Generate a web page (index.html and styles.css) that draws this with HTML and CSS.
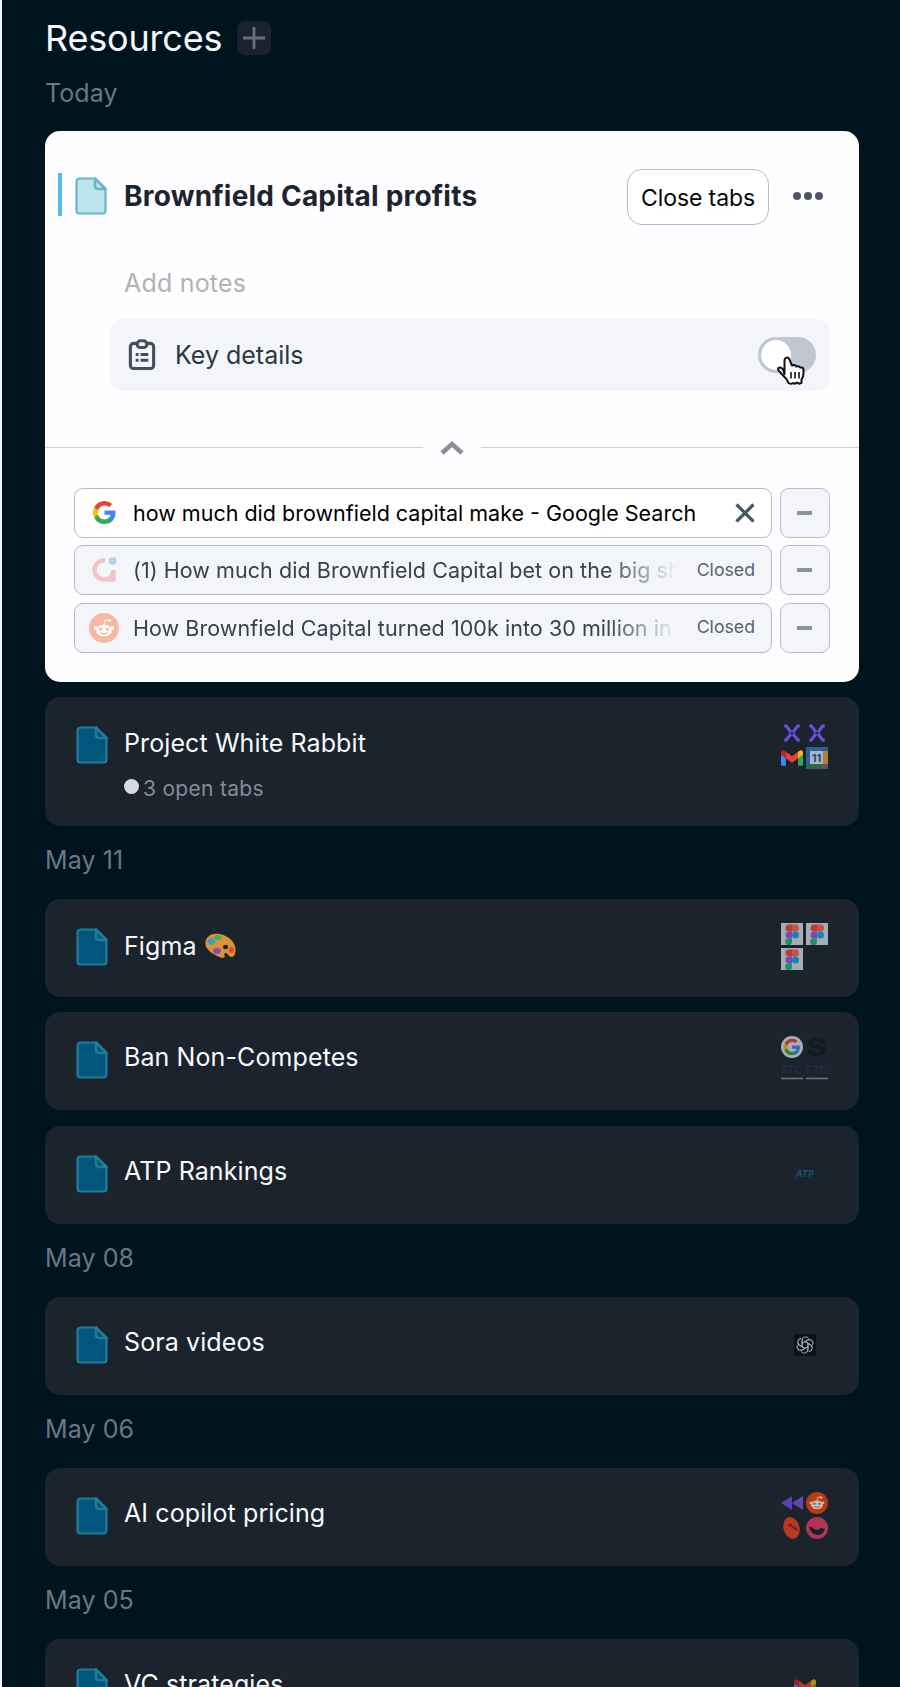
FILE: index.html
```html
<!DOCTYPE html>
<html lang="en">
<head>
    <meta charset="UTF-8">
    <meta name="viewport" content="width=device-width, initial-scale=1.0">
    <title>Resources</title>
    <link rel="stylesheet" href="styles.css">
</head>
<body>
    <!-- shared icons -->
    <svg class="defs">
        <symbol id="file" viewBox="0 0 32 38">
            <path d="M4 1.5h16L30.500 12v21.500a3 3 0 0 1-3 3H4.500a3 3 0 0 1-3-3v-29a3 3 0 0 1 3-3z" fill="currentColor" stroke="var(--line)" stroke-width="2.200"/>
            <path d="M20 1.500v7.500a3 3 0 0 0 3 3h7.500z" fill="currentColor" stroke="var(--line)" stroke-width="2.600" stroke-linejoin="round"/>
        </symbol>
        <symbol id="google" viewBox="0 0 24 24">
            <path fill="#4285f4" d="M22.560 12.250c0-.78-.07-1.530-.2-2.250H12v4.260h5.920a5.060 5.060 0 0 1-2.200 3.320v2.770h3.570c2.080-1.920 3.270-4.740 3.270-8.100z"/>
            <path fill="#34a853" d="M12 23c2.970 0 5.460-.98 7.280-2.660l-3.570-2.770c-.98.660-2.230 1.060-3.710 1.060-2.860 0-5.290-1.930-6.160-4.530H2.180v2.840A11 11 0 0 0 12 23z"/>
            <path fill="#fbbc05" d="M5.840 14.090a6.600 6.600 0 0 1 0-4.180V7.070H2.180a11 11 0 0 0 0 9.860z"/>
            <path fill="#ea4335" d="M12 5.380c1.620 0 3.060.56 4.210 1.640l3.150-3.150A11 11 0 0 0 2.180 7.070l3.660 2.840C6.710 7.310 9.140 5.380 12 5.380z"/>
        </symbol>
        <symbol id="reddit" viewBox="0 0 30 30">
            <circle cx="15" cy="15" r="15" fill="#ff4500"/>
            <g fill="#fff">
                <ellipse cx="15" cy="17.500" rx="8" ry="6"/>
                <circle cx="6.800" cy="14.800" r="2"/>
                <circle cx="23.200" cy="14.800" r="2"/>
                <circle cx="20.500" cy="7.500" r="1.600"/>
            </g>
            <path d="M15 12l1-5 4 .7" fill="none" stroke="#fff" stroke-width="1.200"/>
            <circle cx="11.700" cy="16" r="1.500" fill="#ff4500"/>
            <circle cx="18.300" cy="16" r="1.500" fill="#ff4500"/>
            <path d="M11.500 19.800q3.500 2.400 7 0" fill="none" stroke="#ff4500" stroke-width="1.200"/>
        </symbol>
        <symbol id="gmail" viewBox="0 0 20 20">
            <path fill="#4285f4" d="M0 6l4.500 3.400V17H1.400A1.400 1.400 0 0 1 0 15.600z"/>
            <path fill="#34a853" d="M20 6l-4.500 3.400V17h3.100a1.400 1.400 0 0 0 1.400-1.400z"/>
            <path fill="#fbbc04" d="M15.500 4.300l1.300-1A2 2 0 0 1 20 5v1.800l-4.500 3.500z"/>
            <path fill="#ea4335" d="M4.500 10.200V4.300L10 8.400l5.500-4.100v5.900L10 14.300z"/>
            <path fill="#c5221f" d="M0 5a2 2 0 0 1 3.200-1.700l1.300 1v5.900L0 6.800z"/>
        </symbol>
        <symbol id="cross" viewBox="0 0 20 20">
            <path d="M3 3.500h1.700L8.500 8.500v3l-3.800 5H3M17 3.500h-1.700l-3.800 5v3l3.800 5H17" fill="none" stroke="#6b4de0" stroke-width="2.800"/>
            <path d="M8.500 10h3" stroke="#1c232e" stroke-width="1.500"/>
        </symbol>
        <symbol id="figma" viewBox="0 0 22 22">
            <path fill="#a4acb4" d="M0 0h22v22H0z"/>
            <path fill="#b63f30" d="M11 1.500H8a3.500 3.500 0 0 0 0 7h3z"/>
            <path fill="#c94f48" d="M11 1.500h3.500a3.500 3.500 0 0 1 0 7H11z"/>
            <path fill="#7a48b8" d="M11 8.500H8a3.400 3.400 0 0 0 0 6.900h3z"/>
            <circle cx="14.500" cy="11.900" r="3.500" fill="#1583b8"/>
            <path fill="#219064" d="M11 15.400H8a3.400 3.400 0 1 0 3 3.400z"/>
        </symbol>
        <symbol id="ftc" viewBox="0 0 22 22">
            <text x="11" y="13" class="ftc-text">FTC</text>
            <path d="M0 17.500h22" stroke="#77706f" stroke-width="1.600"/>
        </symbol>
    </svg>

    <div class="container">
        <div class="header">
            <h1>Resources</h1>
            <button class="add-btn">
                <svg width="34" height="34"><path d="M6 17h22M17 6v22" stroke="#66717b" stroke-width="2.800"/></svg>
            </button>
        </div>

        <h2>Today</h2>
        <div class="card active">
            <div class="card-top">
                <svg class="file"><use href="#file"/></svg>
                <span class="name">Brownfield Capital profits</span>
                <button class="close-tabs">Close tabs</button>
                <svg class="more" width="30" height="10"><g fill="#4d5667"><circle cx="4" cy="5" r="4"/><circle cx="15" cy="5" r="4"/><circle cx="26" cy="5" r="4"/></g></svg>
            </div>
            <div class="notes">Add notes</div>
            <div class="details">
                <svg class="clipboard" viewBox="0 0 28 32" fill="none" stroke="#43505b" stroke-width="3.200">
                    <path d="M9 4.500H5.500a3.500 3.500 0 0 0-3.500 3.500v19a3.500 3.500 0 0 0 3.500 3.500h17A3.500 3.500 0 0 0 26 27V8a3.500 3.500 0 0 0-3.500-3.500H19"/>
                    <rect x="9" y="1.800" width="10" height="7" rx="3.500"/>
                    <path d="M7.500 16h3M12.500 16h8M7.500 22h3M12.500 22h8"/>
                </svg>
                <span>Key details</span>
                <div class="toggle">
                    <div class="knob"></div>
                    <svg class="cursor" width="30" height="32" viewBox="0 0 30 32">
                        <path d="M9.500 19V4.800a2.500 2.500 0 0 1 4.800-.6L17 10.500q3-1.500 4.200 1 3-1 4 1 3.300-.5 3.300 2.500v3.500q0 3.500-2 6v3.500q-2.500 1.500-4.500-.5-2 2-4 .5-2 1.500-4.500 0-1-3.500-4-6l-5.500-6Q2 13.500 4 12.700q2-.7 4 1.800z" fill="#fff" stroke="#111" stroke-width="2" stroke-linejoin="round"/>
                        <path d="M16 17v6.500M20 17v6.500M24 17v6.500" stroke="#111" stroke-width="1.600"/>
                    </svg>
                </div>
            </div>
            <div class="divider">
                <svg width="26" height="16"><path d="M3 13l10-9 10 9" fill="none" stroke="#869196" stroke-width="4.500"/></svg>
            </div>
            <div class="tabs">
                <div class="tab-row">
                    <div class="tab open">
                        <svg class="tab-icon"><use href="#google" x="3" y="2" width="25" height="25"/></svg>
                        <span class="tab-name">how much did brownfield capital make - Google Search</span>
                        <svg class="x" width="20" height="20"><path d="M1.500 1.500l17 17M18.500 1.500l-17 17" stroke="#4a575f" stroke-width="3.200"/></svg>
                    </div>
                    <button class="remove"></button>
                </div>
                <div class="tab-row">
                    <div class="tab">
                        <svg class="tab-icon faded" viewBox="0 0 30 30">
                            <path d="M16 5.500a9.500 9.500 0 1 0 8.500 9.500v9.500H14" fill="none" stroke="#ef6f6f" stroke-width="4.500"/>
                            <circle cx="23.500" cy="6" r="4" fill="#4e9fb5"/>
                        </svg>
                        <span class="tab-name fade">(1) How much did Brownfield Capital bet on the big sh</span>
                        <span class="closed">Closed</span>
                    </div>
                    <button class="remove"></button>
                </div>
                <div class="tab-row">
                    <div class="tab">
                        <svg class="tab-icon faded"><use href="#reddit"/></svg>
                        <span class="tab-name fade">How Brownfield Capital turned 100k into 30 million in t</span>
                        <span class="closed">Closed</span>
                    </div>
                    <button class="remove"></button>
                </div>
            </div>
        </div>

        <div class="card tall">
            <svg class="file"><use href="#file"/></svg>
            <div class="info">
                <span class="name">Project White Rabbit</span>
                <span class="open-tabs"><i class="dot"></i>3 open tabs</span>
            </div>
            <div class="favicons">
                <svg><use href="#cross"/></svg>
                <svg><use href="#cross"/></svg>
                <svg><use href="#gmail"/></svg>
                <svg viewBox="0 0 22 22">
                    <path fill="#315c96" d="M0 0h22v22H0z"/>
                    <path fill="#a98332" d="M17 4h5v13h-5z"/>
                    <path fill="#286a4c" d="M0 17h17v5H0z"/>
                    <path fill="#a33c38" d="M17 17h5l-5 5z"/>
                    <path fill="#a9b6c4" d="M4 4h13v13H4z"/>
                    <text x="10.500" y="15" class="cal">11</text>
                </svg>
            </div>
        </div>

        <h2>May 11</h2>
        <div class="card">
            <svg class="file"><use href="#file"/></svg>
            <span class="name with-icon">Figma
                <svg class="palette" viewBox="0 0 32 26">
                    <path d="M2 7C5-1 17-1 25 5c6 4.500 8 11 5.500 17-2 3.500-5.500 1.500-7-1-1.500-2-4-1-3 1.500 1 2.500-2 3-5 1.500C6 20-1 14 2 7z" fill="#dd9236"/>
                    <ellipse cx="14" cy="4.500" rx="3.600" ry="2.500" fill="#35b06c"/>
                    <ellipse cx="7.500" cy="8.500" rx="3.600" ry="3.200" fill="#3d9fc0"/>
                    <ellipse cx="13" cy="18" rx="4" ry="2.900" fill="#8a4bb0"/>
                    <ellipse cx="27.500" cy="17" rx="2.400" ry="3" fill="#dc4632"/>
                    <ellipse cx="21.500" cy="14" rx="2.600" ry="2.200" fill="#1c222d"/>
                </svg>
            </span>
            <div class="favicons">
                <svg><use href="#figma"/></svg>
                <svg><use href="#figma"/></svg>
                <svg><use href="#figma"/></svg>
            </div>
        </div>
        <div class="card">
            <svg class="file"><use href="#file"/></svg>
            <span class="name">Ban Non-Competes</span>
            <div class="favicons">
                <svg class="dim" viewBox="0 0 22 22"><circle cx="11" cy="11" r="11" fill="#e6eaee"/><use href="#google" x="2" y="2" width="18" height="18"/></svg>
                <svg class="s-icon" viewBox="0 0 22 22"><text x="11" y="20" class="s-logo" textLength="21" lengthAdjust="spacingAndGlyphs">S</text></svg>
                <svg><use href="#ftc"/></svg>
                <svg><use href="#ftc"/></svg>
            </div>
        </div>
        <div class="card">
            <svg class="file"><use href="#file"/></svg>
            <span class="name">ATP Rankings</span>
            <div class="favicons single">
                <svg viewBox="0 0 22 22"><text x="11" y="14" class="atp">ATP</text></svg>
            </div>
        </div>

        <h2>May 08</h2>
        <div class="card">
            <svg class="file"><use href="#file"/></svg>
            <span class="name">Sora videos</span>
            <div class="favicons single">
                <svg viewBox="0 0 22 22">
                    <path fill="#09131b" d="M0 0h22v22H0z"/>
                    <g fill="none" stroke="#a4a9ae" stroke-width="1">
                        <path id="arm" d="M8 12.700V6.500a3.700 3.700 0 0 1 6.800-2M8 9.300l5.300-3a3.700 3.700 0 0 1 2.700-.4"/>
                        <use href="#arm" transform="rotate(60 11 11)"/>
                        <use href="#arm" transform="rotate(120 11 11)"/>
                        <use href="#arm" transform="rotate(180 11 11)"/>
                        <use href="#arm" transform="rotate(240 11 11)"/>
                        <use href="#arm" transform="rotate(300 11 11)"/>
                    </g>
                </svg>
            </div>
        </div>

        <h2>May 06</h2>
        <div class="card">
            <svg class="file"><use href="#file"/></svg>
            <span class="name">AI copilot pricing</span>
            <div class="favicons">
                <svg viewBox="0 0 22 22"><path fill="#5a3fae" d="M0 11l11-7v14z"/><path fill="#6a44ac" d="M11 11l11-7v14z"/></svg>
                <svg class="dim"><use href="#reddit"/></svg>
                <svg viewBox="0 0 22 22"><ellipse cx="10.500" cy="11" rx="8" ry="11" transform="rotate(-15 10.500 11)" fill="#b93824"/><path d="M7 9l3-1.500 1 2.500M12 10l4 3" fill="none" stroke="#5e211f" stroke-width="1.600"/></svg>
                <svg viewBox="0 0 22 22"><circle cx="11" cy="11" r="11" fill="#ae3850"/><path d="M3 10q3-1 5 2 4 2 7-1l4 1q-2 6-8 6-6-1-8-8z" fill="#1d202c"/></svg>
            </div>
        </div>

        <h2>May 05</h2>
        <div class="card">
            <svg class="file"><use href="#file"/></svg>
            <span class="name">VC strategies</span>
            <div class="favicons single">
                <svg class="dim"><use href="#gmail"/></svg>
            </div>
        </div>
    </div>
</body>
</html>
```
FILE: styles.css
```css
* {
    box-sizing: border-box;
}
body {
    font-family: Inter, "Liberation Sans", sans-serif;
    margin: 0;
    height: 1687px;
    overflow: hidden;
    background: #00141d;
    border-left: 2px solid #f4f4f6;
}
.defs {
    display: none;
}
.container {
    width: 814px;
    margin-left: 43px;
}
button {
    font-family: inherit;
    padding: 0;
    cursor: pointer;
}
.header {
    display: flex;
    align-items: center;
    padding-top: 16px;
    height: 60px;
}
h1 {
    margin: 0;
    width: 192px;
    font-size: 36px;
    font-weight: 400;
    line-height: 44px;
    letter-spacing: -0.2px;
    color: #f6f8fc;
    white-space: nowrap;
}
.add-btn {
    width: 34px;
    height: 34px;
    border: none;
    border-radius: 8px;
    background: #1a222d;
}
.add-btn svg {
    display: block;
}
h2 {
    margin: 0;
    height: 73px;
    padding-top: 18px;
    font-size: 25px;
    font-weight: 400;
    line-height: 32px;
    letter-spacing: 0.1px;
    color: #6a7884;
}
.header + h2 {
    height: 71px;
    padding-top: 17px;
}
.card {
    display: flex;
    height: 98px;
    padding: 29px 30px 0 31px;
    border-radius: 15px;
    background: #1b232d;
    color: #f8fafc;
}
.card + .card {
    margin-top: 15.500px;
}
.file {
    --line: #1f7d97;
    flex: none;
    width: 32px;
    height: 38px;
    color: #02567d;
}
.name {
    margin-left: 16px;
    font-size: 25px;
    line-height: 32px;
    letter-spacing: 0.1px;
    white-space: nowrap;
}
.with-icon {
    margin-top: 2px;
}
.card.tall {
    height: 129px;
}
.tall .name {
    margin-top: 1px;
}
.info {
    display: flex;
    flex-direction: column;
}
.open-tabs {
    display: flex;
    align-items: center;
    gap: 4px;
    margin: 15px 0 0 16px;
    font-size: 21px;
    line-height: 30px;
    letter-spacing: 0.3px;
    color: #838d97;
}
.dot {
    width: 15px;
    height: 15px;
    border-radius: 50%;
    background: #d7d9e2;
    margin-top: -4px;
}
.palette {
    width: 32px;
    height: 26px;
    vertical-align: -4px;
}
.favicons {
    display: grid;
    grid-template-columns: 22px 22px;
    grid-auto-rows: 22px;
    gap: 3px;
    margin: -5px 0 0 auto;
    width: 48px;
    height: 47px;
}
.tall .favicons {
    margin-top: -4px;
}
.favicons.single {
    display: flex;
    justify-content: center;
    align-items: center;
    margin-top: -4px;
}
.favicons svg {
    width: 22px;
    height: 22px;
}
.dim {
    opacity: 0.7;
}
.cal {
    font-size: 11px;
    font-weight: 700;
    text-anchor: middle;
    fill: #25486e;
}
.ftc-text {
    font-size: 11px;
    text-anchor: middle;
    fill: #193748;
}
.atp {
    font-size: 9px;
    font-weight: 700;
    font-style: italic;
    text-anchor: middle;
    fill: #10557a;
}
.s-icon {
    overflow: visible;
}
.s-logo {
    font-size: 25px;
    font-weight: 800;
    text-anchor: middle;
    fill: #101b25;
}

/* expanded card */
.card.active {
    flex-direction: column;
    height: 550.500px;
    padding: 0;
    background: #fefdff;
    color: #1c242d;
}
.card.active + .card {
    margin-top: 15px;
}
.card-top {
    display: flex;
    align-items: center;
    height: 43px;
    margin: 42px 33px 0 13px;
    padding-left: 14px;
    border-left: 4px solid #54bce2;
}
.active .file {
    --line: #66b8c6;
    margin: 3px 0 0 -1px;
    color: #bce4ea;
}
.active .name {
    margin: 2px 0 0 17px;
    font-size: 28px;
    font-weight: 700;
    letter-spacing: 0.200px;
}
.close-tabs {
    width: 142px;
    height: 56px;
    margin: 4px 24px 0 auto;
    padding-top: 2px;
    border: 1.500px solid #b4bfc7;
    border-radius: 15px;
    background: #fff;
    font-size: 23px;
    letter-spacing: -0.1px;
    color: #050709;
}
.more {
    margin-top: 3px;
    margin-right: 3px;
}
.notes {
    margin: 51px 0 0 79px;
    font-size: 25px;
    line-height: 32px;
    letter-spacing: 0.2px;
    color: #b2b2b4;
}
.details {
    display: flex;
    align-items: center;
    height: 72px;
    margin: 20px 29px 0 65px;
    padding: 0 14px 0 18px;
    border-radius: 14px;
    background: #f3f5f9;
    font-size: 25px;
    color: #2c3740;
}
.clipboard {
    width: 28px;
    height: 31px;
    margin: -2px 19px 0 0;
}
.toggle {
    position: relative;
    width: 58px;
    height: 36px;
    margin-left: auto;
    padding: 3px;
    border-radius: 18px;
    background: #bfc6cf;
}
.knob {
    width: 30px;
    height: 30px;
    border-radius: 50%;
    background: #fff;
}
.cursor {
    position: absolute;
    left: 17px;
    top: 18px;
}
.divider {
    display: flex;
    align-items: center;
    gap: 16px;
    height: 16px;
    margin-top: 48.500px;
}
.divider::before,
.divider::after {
    content: "";
    flex: 1;
    height: 1px;
    margin-top: -1px;
    background: #cbd4d9;
}
.tabs {
    display: flex;
    flex-direction: column;
    gap: 7.500px;
    margin: 32px 29px 0;
}
.tab-row {
    display: flex;
    gap: 7.500px;
}
.tab {
    display: flex;
    align-items: center;
    width: 698px;
    height: 50px;
    padding: 0 16px 0 14px;
    border: 1.500px solid #b0bcc6;
    border-radius: 9px;
    background: #f3f5f9;
    font-size: 21.500px;
    color: #36424c;
}
.tab.open {
    background: #fff;
    color: #000;
}
.tab-icon {
    flex: none;
    width: 30px;
    height: 30px;
    margin-right: 14px;
}
.faded {
    opacity: 0.35;
}
.tab-name {
    width: 564px;
    line-height: 30px;
    white-space: nowrap;
}
.tab-name.fade {
    width: 550px;
    letter-spacing: 0.060px;
    -webkit-mask-image: linear-gradient(to right, #000 86%, transparent 99%);
    mask-image: linear-gradient(to right, #000 86%, transparent 99%);
}
.x {
    margin-left: auto;
}
.closed {
    margin: -2px 0 0 auto;
    font-size: 17.700px;
    color: #56636f;
}
.remove {
    display: flex;
    align-items: center;
    justify-content: center;
    width: 50px;
    height: 50px;
    border: 1.500px solid #b5bfca;
    border-radius: 9px;
    background: #f3f5f9;
}
.remove::before {
    content: "";
    width: 15px;
    height: 4px;
    background: #89959e;
}
```
